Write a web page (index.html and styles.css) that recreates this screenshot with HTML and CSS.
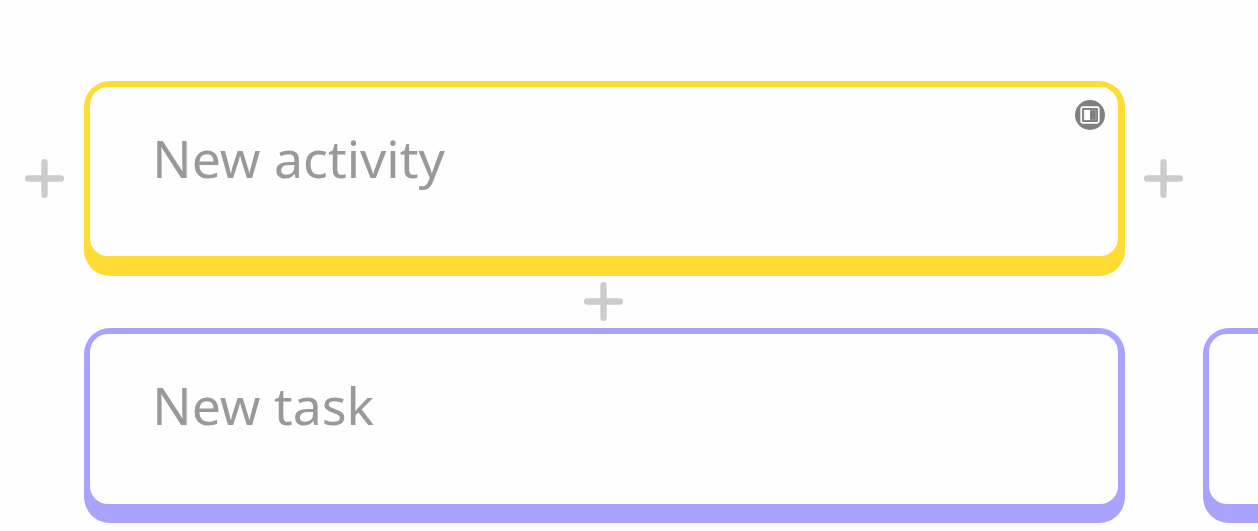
FILE: index.html
```
<!DOCTYPE html>
<html lang="en">

<head>
    <meta charset="UTF-8">
    <meta name="viewport" content="width=device-width, initial-scale=1.0">
    <title>Story map</title>
    <link rel="stylesheet" href="styles.css">
</head>

<body>
    <main class="board">
        <button class="add" aria-label="Add activity before">
            <svg class="plus" viewBox="0 0 39 39"><path d="M19.5 3.2v32.6M3.2 19.5h32.6" /></svg>
        </button>
        <div class="card activity">
            <div class="cardBody">
                <span class="title">New activity</span>
                <svg class="badge" viewBox="0 0 30 30">
                    <circle cx="15" cy="15" r="15" fill="#808080" />
                    <rect x="6.2" y="7.2" width="17.6" height="15.6" rx="1.6" fill="none" stroke="#fff" stroke-width="1.7" />
                    <rect x="8.7" y="9.7" width="12.6" height="10.6" fill="#a0a0a0" />
                    <rect x="15" y="10.6" width="5.4" height="8.8" fill="#808080" />
                    <rect x="9.2" y="10" width="5.8" height="10" fill="#fff" />
                </svg>
            </div>
        </div>
        <button class="add" aria-label="Add activity after">
            <svg class="plus" viewBox="0 0 39 39"><path d="M19.5 3.2v32.6M3.2 19.5h32.6" /></svg>
        </button>

        <button class="add addTask" aria-label="Add task">
            <svg class="plus" viewBox="0 0 39 39"><path d="M19.5 3.2v32.6M3.2 19.5h32.6" /></svg>
        </button>

        <div class="card task firstTask">
            <div class="cardBody">
                <span class="title">New task</span>
            </div>
        </div>
        <div class="card task nextTask">
            <div class="cardBody"></div>
        </div>
    </main>
</body>

</html>
```

FILE: styles.css
```
* {
    box-sizing: border-box;
}

body {
    margin: 0;
    background: #fefefe;
    font-family: "Noto Sans", "Open Sans", sans-serif;
    overflow: hidden;
}

.board {
    display: grid;
    grid-template-columns: 78px 1041px 78px 1041px;
    grid-template-rows: 195px 52.5px 195px;
    padding: 80.5px 0 0 5.5px;
    overflow: hidden;
}

.card {
    padding: 6.4px 6.5px 19.2px;
    border-radius: 26px;
}

.activity {
    background: #ffdc34;
}

.task {
    background: #aaa2ff;
}

.firstTask {
    grid-column: 2;
}

.nextTask {
    grid-column: 4;
}

.cardBody {
    display: flex;
    justify-content: space-between;
    align-items: flex-start;
    height: 100%;
    padding: 13px 13px 0 62.3px;
    border-radius: 18px;
    background: #fefefe;
}

.title {
    margin-top: 23px;
    font-size: 51.8px;
    line-height: 71px;
    color: #999;
}

.badge {
    width: 30px;
    height: 30px;
}

.add {
    display: flex;
    justify-content: center;
    align-items: center;
    padding: 0;
    border: none;
    background: none;
    cursor: pointer;
}

.addTask {
    grid-row: 2;
    grid-column: 2;
    padding-right: 1px;
}

.plus {
    width: 39px;
    height: 39px;
    fill: none;
    stroke: #ccc;
    stroke-width: 6.4px;
    stroke-linecap: round;
}
```
